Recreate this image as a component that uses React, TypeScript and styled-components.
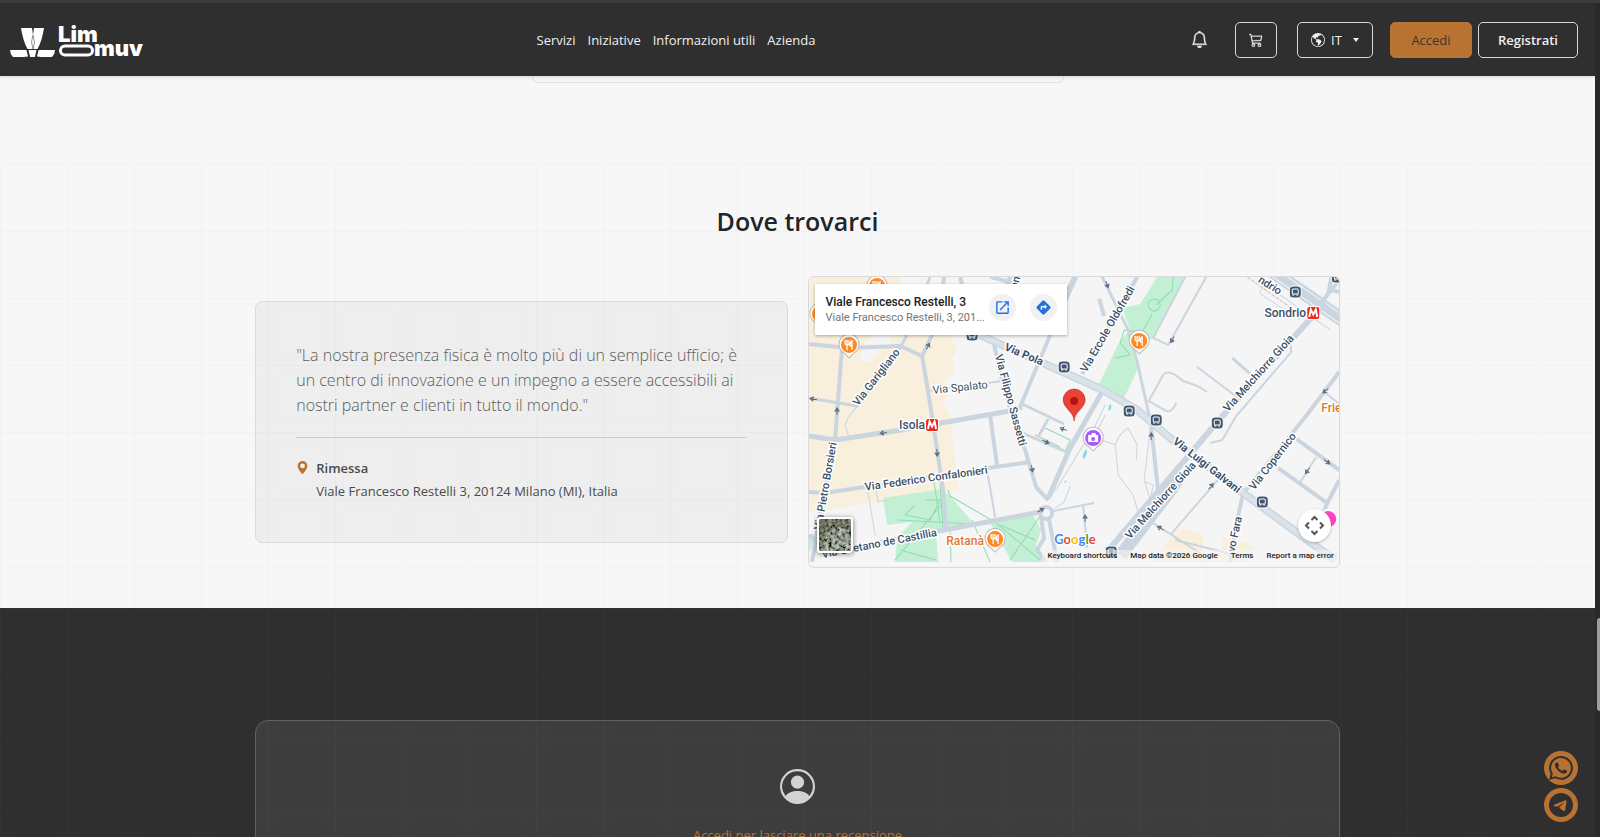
import React from "react";
import styled, { createGlobalStyle, css } from "styled-components";
import { BsBell, BsCart3, BsGlobeAmericas, BsGeoAltFill, BsPersonCircle, BsTelegram, BsWhatsapp } from "react-icons/bs";
import { MdDirections, MdOpenInNew } from "react-icons/md";

const color = {
  dark: "#2f2f2f",
  light: "#f7f7f7",
  copper: "#b87333",
  road: "#cbd5df",
  mapInk: "#3c5066",
};

const GlobalStyle = createGlobalStyle`
  *, *::before, *::after { box-sizing: border-box; }
  body {
    margin: 0;
    background: ${color.dark};
    font-family: "Open Sans", "Noto Sans", sans-serif;
    font-size: 13px;
    color: #212529;
  }
  h2, p, address { margin: 0; font-style: normal; }
  button, select { font: inherit; }
  a { color: inherit; text-decoration: none; }
`;

/* ---------- Page frame ---------- */

const Shell = styled.div`
  display: flex;
  height: 100vh;
  overflow: hidden;
  border-top: 3px solid #3b3a40;
`;

const Page = styled.div`
  position: relative;
  flex: 1;
  min-width: 0;
  overflow: hidden;
`;

const ScrollRail = styled.div`
  width: 5px;
  flex: none;
  display: flex;
  justify-content: flex-end;
  padding-top: 615px;
  background: #2a2a2c;
`;

const ScrollThumb = styled.div`
  width: 3px;
  height: 93px;
  border-radius: 3px 0 0 3px;
  background: #9d9d9d;
`;

/* ---------- Header ---------- */

const Header = styled.header`
  position: relative;
  z-index: 2;
  display: flex;
  align-items: center;
  justify-content: space-between;
  height: 73px;
  padding: 0 17px 0 10px;
  background: ${color.dark};
  box-shadow: 0 1px 3px rgba(0, 0, 0, 0.15);
`;

const Brand = styled.a`
  display: flex;
  width: 160px;
`;

const Nav = styled.nav`
  display: flex;
  gap: 12px;
  padding: 0 8px;
  color: #f0f0f0;
`;

const Actions = styled.div`
  display: flex;
  align-items: center;
`;

const outline = css`
  border: 1px solid #d8d8d8;
  border-radius: 5px;
  background: transparent;
  color: #f0f0f0;
`;

const BellButton = styled.button`
  display: flex;
  padding: 0 9px;
  margin-right: 18px;
  border: 0;
  background: none;
  color: #f0f0f0;
  font-size: 17px;

  path { stroke: currentColor; stroke-width: 0.4; }
`;

const CartButton = styled.button`
  ${outline}
  display: flex;
  align-items: center;
  justify-content: center;
  width: 42px;
  height: 36px;
  margin-right: 20px;
  padding: 0;
  font-size: 14px;

  path { stroke: currentColor; stroke-width: 0.3; }
`;

const Language = styled.label`
  ${outline}
  position: relative;
  display: flex;
  align-items: center;
  gap: 6px;
  width: 76px;
  height: 36px;
  margin-right: 17px;
  padding: 0 13px;
  font-size: 14px;

  select {
    flex: 1;
    min-width: 0;
    padding: 0;
    appearance: none;
    border: 0;
    background: none;
    color: inherit;
    font-size: 13px;
  }

  &::after {
    content: "";
    border: 3px solid transparent;
    border-top: 4px solid #f0f0f0;
    border-bottom: 0;
  }
`;

const AccountButton = styled.button<{ $filled?: boolean }>`
  ${outline}
  height: 36px;
  padding: 0;
  width: ${(p) => (p.$filled ? "82px" : "100px")};
  font-weight: ${(p) => (p.$filled ? 500 : 600)};
  ${(p) =>
    p.$filled &&
    css`
      margin-right: 6px;
      border-color: ${color.copper};
      background: ${color.copper};
      color: #3d332b;
    `}
`;

/* ---------- Sections ---------- */

const Container = styled.div`
  position: relative;
  width: 68%;
  margin: 0 auto;
`;

const PreviousSection = styled.section`
  height: 88px;
  background: ${color.light};
`;

const PreviousCard = styled.div`
  width: 532px;
  max-width: 50%;
  height: 7px;
  margin: 0 auto;
  border: 1px solid #e1e1e1;
  border-top: 0;
  border-radius: 0 0 6px 6px;
`;

const Section = styled.section<{ $dark?: boolean }>`
  position: relative;
  overflow: hidden;
  background: ${(p) => (p.$dark ? color.dark : color.light)};
  padding: ${(p) => (p.$dark ? "112px 0" : "39px 0 40px")};
`;

const GridLayer = styled.svg`
  position: absolute;
  inset: 0;
  width: 100%;
  height: 100%;
`;

const Title = styled.h2`
  text-align: center;
  font-size: 25px;
  line-height: 36px;
  font-weight: 600;
`;

const Columns = styled.div`
  display: grid;
  grid-template-columns: 1fr 1fr;
  gap: 20px;
  align-items: center;
  margin-top: 37px;
`;

const OfficeCard = styled.article`
  padding: 41px 40px 39px;
  border: 1px solid #dcdcdc;
  border-radius: 7px;
  background: rgba(0, 0, 0, 0.035);
`;

const Quote = styled.p`
  padding-bottom: 19px;
  border-bottom: 1px solid #cfcfcf;
  font-size: 16px;
  line-height: 25px;
  font-weight: 300;
  color: #5c5c5c;
`;

const Place = styled.address`
  display: grid;
  grid-template-columns: 12px 1fr;
  column-gap: 8px;
  margin-top: 19px;
  line-height: 23px;
  color: #4a4a4a;

  svg {
    margin-top: 4px;
    color: ${color.copper};
    font-size: 13px;
  }

  strong { font-weight: 600; }
  span { grid-column: 2; }
`;

/* ---------- Map ---------- */

const MapFrame = styled.div`
  position: relative;
  padding-bottom: 5px;
  overflow: hidden;
  border: 1px solid #dadada;
  border-radius: 6px;
  font-family: Roboto, sans-serif;
`;

const MapDrawing = styled.svg`
  display: block;
  width: 100%;
  height: 285px;
`;

const PlaceCard = styled.div`
  position: absolute;
  top: 7px;
  left: 6px;
  display: flex;
  align-items: center;
  gap: 14px;
  width: 252px;
  height: 51px;
  padding: 0 10px 4px 11px;
  background: #fff;
  box-shadow: 0 1px 3px rgba(0, 0, 0, 0.3);
`;

const PlaceText = styled.div`
  width: 149px;
  padding-top: 4px;
  font-size: 11px;
  line-height: 15px;
  color: #757575;
  white-space: nowrap;

  strong {
    display: block;
    font-size: 12px;
    line-height: 16px;
    font-weight: 500;
    color: #202124;
  }
`;

const RoundLink = styled.a`
  display: flex;
  flex: none;
  align-items: center;
  justify-content: center;
  width: 27px;
  height: 27px;
  border-radius: 50%;
  background: #f1f1f1;
  color: #1a73e8;
  font-size: 17px;
`;

const LayerButton = styled.button`
  position: absolute;
  left: 8px;
  bottom: 14px;
  display: flex;
  width: 36px;
  height: 36px;
  padding: 0;
  border: 2px solid #fff;
  border-radius: 3px;
  overflow: hidden;
  box-shadow: 0 1px 5px rgba(0, 0, 0, 0.5);
`;

const CameraButton = styled.button`
  position: absolute;
  right: 8px;
  bottom: 25px;
  display: flex;
  padding: 6px;
  border: 0;
  border-radius: 50%;
  background: #fff;
  box-shadow: 0 1px 3px rgba(0, 0, 0, 0.25);
`;

const Attribution = styled.div`
  position: absolute;
  right: 0;
  bottom: 5px;
  display: flex;
  gap: 13px;
  padding: 0 5px;
  background: rgba(245, 245, 245, 0.6);
  font-size: 8px;
  line-height: 12px;
  font-weight: 500;
  color: #222;
`;

const roads: Array<[string, number]> = [
  ["M809 344L848 348L900 346L922 356L937 325L944 277", 4],
  ["M842 348L835 440L833 450L820 515L812 562", 4],
  ["M809 398L857 406L900 348L912 325L930 277", 3],
  ["M922 356L927 385L934 430L943 490L946 528", 4],
  ["M809 436L835 440L895 431L1010 411L1022 407", 5],
  ["M928 391L1002 381", 2],
  ["M809 492L825 493L988 468L1030 462", 4],
  ["M990 415L997 466", 4],
  ["M987 470L995 517", 2],
  ["M993 340L1003 385L1015 425L1025 450L1036 487L1048 500", 4],
  ["M1076 277L1050 335L1020 407", 4],
  ["M1103 390L1070 448L1048 498", 5],
  ["M1020 432L1067 452M1022 404L1064 424M1048 419L1038 437", 3],
  ["M809 535L830 553L933 532L1040 512", 5],
  ["M1041 518L1044 538L1037 550L1046 562M1049 520L1057 562", 4],
  ["M1053 511L1094 503M1083 505L1087 548", 2],
  ["M857 406L848 418L845 425L849 437", 1],
  ["M1048 500L1058 486L1080 450L1093 430L1105 405M1055 508L1064 502L1070 486", 1],
  ["M868 492L875 535M875 485L878 502L888 500", 1],
  ["M990 277L1020 285M1010 277L1005 290M960 277L966 300", 4],
  ["M1102 277L1128 330L1137 362L1150 420", 3],
  ["M1137 277L1082 374M1074 277L1068 290M1099 299L1104 316", 4],
  ["M1206 277L1168 345L1153 338L1185 277", 2],
  ["M1325 303L1309 320L1291 340L1217 422L1110 548", 6],
  ["M1290 338L1291 352L1236 416L1222 440L1210 443", 2],
  ["M1178 480L1120 555", 12],
  ["M1182 476L1176 490L1124 558", 4],
  ["M1319 305L1339 280M1330 290L1339 292M1331 277L1328 294", 4],
  ["M1339 372L1305 417L1250 485L1243 493L1237 520L1230 562", 4],
  ["M1295 438L1339 470M1278 468L1327 503L1339 480M1327 503L1320 520", 4],
  ["M1316 457L1300 482M1324 392L1339 404", 2],
  ["M1151 427L1158 492", 4],
  ["M1148 402L1163 375Q1167 370 1175 375L1183 381L1197 386L1207 392M1148 401L1166 411Q1172 413 1176 403", 2],
  ["M1197 367L1238 398", 2],
  ["M1232 358L1250 374", 3],
  ["M1096 438L1115 445Q1120 432 1128 428L1137 445L1136 460M1115 445L1118 475L1133 495L1140 520", 1],
  ["M1150 430L1144 480L1150 500L1153 485L1145 482M1105 415L1095 435", 1],
  ["M1170 535L1220 477M1153 523L1200 553M1175 540L1235 555", 2],
  ["M1259 293L1264 284L1330 330M1260 294L1300 320", 1],
];

const parkPaths =
  "M934 482L940 522M940 482L943 530M948 490L950 496L995 522L1040 560M895 560L945 500M897 520L972 524M900 550L936 560M925 500L940 500L930 520L905 515L915 505M1000 525L1035 540M1040 516L1010 560M950 530L951 562M972 520L990 562M975 545L985 545M1045 428L1070 440L1066 450M1035 435L1060 447M1173 277L1172 290L1156 305M1152 314L1142 332L1124 330L1120 343L1130 355L1115 358";

/* text, centre x, centre y, angle, weight */
const labels: Array<[string, number, number, number, number]> = [
  ["Via Garigliano", 876, 377, -52, 500],
  ["Via Spalato", 960, 387, -6, 400],
  ["Via Pola", 1024, 354, 23, 700],
  ["Via Filippo Sassetti", 1011, 400, 75, 500],
  ["Via Ercole Oldofredi", 1107, 329, -60, 500],
  ["Via Melchiorre Gioia", 1258, 373, -48, 500],
  ["Via Melchiorre Gioia", 1160, 500, -48, 500],
  ["Via Luigi Galvani", 1207, 465, 38, 700],
  ["Via Copernico", 1272, 461, -52, 500],
  ["Via Federico Confalonieri", 926, 478, -8, 500],
  ["Via Pietro Borsieri", 825, 486, -80, 500],
  ["Via Gaetano de Castillia", 879, 543, -11, 500],
  ["ndrio", 1270, 285, 32, 500],
  ["vo Fara", 1234, 534, -78, 500],
  ["oni", 1015, 281, -75, 500],
];

const stops: Array<[number, number]> = [
  [972, 335], [1064, 367], [1129, 411], [1156, 420], [1217, 423], [1295, 292], [1262, 502], [1337, 277], [1111, 552],
];

const arrows: Array<[number, number, number]> = [
  [813, 399, 190], [837, 411, -90], [928, 346, -65], [883, 433, 172], [937, 453, 85], [1063, 429, 200], [1046, 442, 25],
  [1032, 469, 80], [1041, 510, -30], [1107, 285, 70], [1172, 340, 120], [1325, 391, 140], [1151, 436, -90],
  [1211, 486, -50], [1160, 528, 210], [1307, 471, 125], [1327, 462, 38], [1085, 518, -90],
];

const FoodPin = ({ x, y }: { x: number; y: number }) => (
  <g transform={`translate(${x} ${y})`}>
    <path d="M0 13L-5 8A10 10 0 1 1 5 8Z" fill="#fff" stroke="#b9b9b9" strokeWidth="1" />
    <circle r="8" fill="#ff8a24" />
    <path d="M-4 -5v3q0 2 2 2t2-2v-3M-2 -5V5M3 5V-4q-2 1-2 5h2" fill="none" stroke="#fff" strokeWidth="1.3" />
  </g>
);

const Metro = ({ x, y }: { x: number; y: number }) => (
  <g transform={`translate(${x} ${y})`}>
    <rect x="-7" y="-7" width="14" height="14" rx="2" fill="#fff" />
    <rect x="-6" y="-6" width="12" height="12" rx="2" fill="#f32717" />
    <path d="M-4 4L-2.500 -3.500L0 1.500L2.500 -3.500L4 4" fill="none" stroke="#fff" strokeWidth="2" />
  </g>
);

const Map = () => (
  <MapDrawing viewBox="809 277 530 285" preserveAspectRatio="xMidYMid slice" role="img" aria-label="Map">
    <rect x="600" y="277" width="950" height="290" fill="#f5f5f5" />
    <g fill="#f8efdc">
      <path d="M809 277H900L897 305L950 335L957 350L952 358L955 375L945 378L948 395L943 403L950 415L958 490L885 500L809 513Z" />
      <path d="M1180 527L1203 535L1202 555L1255 545L1245 562H1150ZM1222 537L1250 543L1246 552L1222 552Z" />
    </g>
    <path d="M860 361L864 341L876 335L893 334L888 345L877 352L872 361Z" fill="#f5f5f5" />
    <g fill="#c3f0d5">
      <path d="M883 498L942 489L952 498L973 523L936 532L938 562H895L897 538L912 522L887 525Z" />
      <path d="M990 523L1033 515L1041 530L1036 545L1044 562H1012Z" />
      <path d="M1157 277H1185L1153 338L1135 348L1138 368L1123 400L1098 386L1120 340L1130 330L1122 308L1140 304Z" />
      <path d="M809 537L814 534L812 548L809 552Z" />
    </g>
    <path d={parkPaths} fill="none" stroke="#8edbb0" />
    <circle cx="1154" cy="305" r="6" fill="none" stroke="#8edbb0" />
    <path d="M1273 272L1345 322" stroke={color.road} strokeWidth="14" />
    <path d="M1271 276L1343 326M1277 270L1345 317" stroke="#f5f5f5" />
    <g fill="none" stroke={color.road} strokeLinejoin="round">
      {roads.map(([d, w]) => <path key={d} d={d} strokeWidth={w} />)}
      <circle cx="1046" cy="513" r="6" strokeWidth="4" fill="#f5f5f5" />
      <path d="M975 333L1103 390L1137 410L1170 438L1243 493L1300 535L1335 560" strokeWidth="8" />
    </g>
    <path d="M975 333L1103 390L1137 410L1170 438L1243 493L1300 535L1335 560" fill="none" stroke="#dbe3ea" strokeWidth="5" />
    <path d="M1247 277L1295 311" stroke="#c4c4c4" strokeDasharray="4 1" />
    <path d="M1109 405l2 -1v5l-3 2zM1084 452l2 -3 1 4-3 6-2-2zM1064 482l2 -2v2l-2 1z" fill="#86d8ef" />
    <g fill="none" stroke="#5b6b7c">
      {arrows.map(([x, y, r]) => (
        <path key={`${x}-${y}`} transform={`translate(${x} ${y}) rotate(${r})`} d="M-4 0H3M0 -2L3 0L0 2Z" />
      ))}
    </g>
    {stops.map(([x, y]) => (
      <g key={`${x}-${y}`} transform={`translate(${x} ${y})`}>
        <rect x="-6" y="-6" width="12" height="12" rx="4" fill="#3f566e" stroke="#fff" />
        <rect x="-3" y="-3" width="6" height="5" rx="1" fill="none" stroke="#fff" />
        <path d="M-3 3h2M1 3h2" stroke="#fff" />
      </g>
    ))}
    <g fill={color.mapInk} stroke="#fff" strokeWidth="3" strokeLinejoin="round" paintOrder="stroke" textAnchor="middle" fontSize="11">
      {labels.map(([text, x, y, r, weight]) => (
        <text key={`${text}-${x}`} transform={`translate(${x} ${y}) rotate(${r})`} y="4" fontWeight={weight}>{text}</text>
      ))}
      <g fontSize="12" fontWeight="500">
        <text x="912" y="429">Isola</text>
        <text x="1285" y="317">Sondrio</text>
        <text x="965" y="545" fill="#e0772c">Ratanà</text>
        <text x="1331" y="412" fill="#e0772c">Frie</text>
      </g>
    </g>
    <Metro x={932} y={425} />
    <Metro x={1313} y={313} />
    <FoodPin x={849} y={345} />
    <FoodPin x={877} y={286} />
    <FoodPin x={820} y={314} />
    <FoodPin x={1139} y={341} />
    <FoodPin x={995} y={539} />
    <g transform="translate(1093 438)">
      <path d="M0 13L-5 8A10 10 0 1 1 5 8Z" fill="#fff" stroke="#b9b9b9" />
      <circle r="8" fill="#a55bff" />
      <path d="M-5 -3h3l1-2h3l1 2h2v7h-10z" fill="#fff" />
      <circle r="2" cy="1" fill="#a55bff" />
    </g>
    <circle cx="1328" cy="519" r="9" fill="#ff46c0" stroke="#fff" strokeWidth="2" />
    <path d="M1074 421C1074 412 1063 408 1063 400A11 11 0 0 1 1085 400C1085 408 1074 412 1074 421Z" fill="#ea4335" stroke="#b31412" strokeWidth="0.500" />
    <circle cx="1074" cy="401" r="4" fill="#b31412" />
    <text x="1054" y="544" fontSize="13" fontWeight="700" fontFamily="Lato, sans-serif" stroke="#fff" strokeWidth="2" paintOrder="stroke">
      <tspan fill="#4285f4">G</tspan><tspan fill="#ea4335">o</tspan><tspan fill="#fbbc04">o</tspan><tspan fill="#4285f4">g</tspan><tspan fill="#34a853">l</tspan><tspan fill="#ea4335">e</tspan>
    </text>
  </MapDrawing>
);

const Satellite = () => (
  <svg width="32" height="32" viewBox="0 0 32 32" aria-hidden="true">
    <filter id="terrain" x="0" y="0" width="1" height="1">
      <feTurbulence type="fractalNoise" baseFrequency="0.3" numOctaves="3" seed="4" />
      <feColorMatrix values="1.2 0.3 0 0 -0.48  1.1 0.4 0 0 -0.46  1 0.2 0.2 0 -0.46  0 0 0 0 1" />
    </filter>
    <rect width="32" height="32" filter="url(#terrain)" />
    <path d="M0 0H32V12L20 8L9 14L0 32Z" fill="#4d4a33" fillOpacity="0.400" />
    <path d="M13 10L22 31M18 14L14 29M20 18L30 10" stroke="#8fa3b5" strokeOpacity="0.500" strokeWidth="1.500" />
  </svg>
);

/* ---------- Review card and floating contacts ---------- */

const ReviewCard = styled.div`
  display: flex;
  flex-direction: column;
  align-items: center;
  gap: 21px;
  min-height: 260px;
  padding-top: 48px;
  border: 1px solid #616161;
  border-radius: 13px;
  background: rgba(255, 255, 255, 0.07);
  color: #d2d2d2;
  font-size: 35px;

  a {
    font-size: 13px;
    line-height: 20px;
    color: ${color.copper};
  }
`;

const Contacts = styled.div`
  position: absolute;
  right: 17px;
  bottom: 15px;
  z-index: 2;
  display: grid;
  gap: 3px;

  a {
    display: flex;
    align-items: center;
    justify-content: center;
    width: 34px;
    height: 34px;
    border-radius: 50%;
    background: ${color.copper};
    color: ${color.dark};
    font-size: 24px;
  }
`;

const GridPattern = ({ id, stroke }: { id: string; stroke: string }) => (
  <GridLayer aria-hidden="true">
    <pattern id={id} width="67" height="67" patternUnits="userSpaceOnUse">
      <path d="M0 0.500H67M0.500 0V67" stroke={stroke} strokeWidth="1" fill="none" />
      <rect x="8.500" y="8.500" width="50" height="50" rx="1" stroke={stroke} strokeOpacity="0.600" fill="none" />
    </pattern>
    <rect width="100%" height="100%" fill={`url(#${id})`} />
  </GridLayer>
);

const Logo = () => (
  <svg width="144" height="38" viewBox="0 -6 144 38" fill="#fff" role="img" aria-label="Lim muv">
    <path d="M11 1H22L23 8L24 1H34Q32 14 27.500 22H17.500Q13 14 11 1Z" />
    <path d="M23 8Q20 15 23 22Q26 15 23 8M17 22.500H28" stroke={color.dark} strokeWidth="0.500" fill="none" />
    <path d="M0 23H16.500L18 29.500Q14 30 8 30H3Q0 27 0 23ZM28.500 23H45Q45 27 42 30H37Q31 30 27 29.500ZM18.500 23H26.500L25 30H20Z" />
    <path d="M17 23L19.500 30M28 23L25.500 30" stroke={color.dark} strokeWidth="1" />
    <g fontFamily="Inter, sans-serif" fontWeight="900">
      <text x="48" y="15" fontSize="22">Lim</text>
      <text x="84" y="29" fontSize="22">muv</text>
    </g>
    <rect x="50.500" y="19" width="32" height="9" rx="4.500" fill="none" stroke="#fff" strokeWidth="3" />
  </svg>
);

export default function App() {
  return (
    <Shell>
      <GlobalStyle />
      <Page>
        <Header>
          <Brand href="#"><Logo /></Brand>
          <Nav>
            <a href="#servizi">Servizi</a>
            <a href="#iniziative">Iniziative</a>
            <a href="#informazioni">Informazioni utili</a>
            <a href="#azienda">Azienda</a>
          </Nav>
          <Actions>
            <BellButton aria-label="Notifiche"><BsBell /></BellButton>
            <CartButton aria-label="Carrello"><BsCart3 /></CartButton>
            <Language>
              <BsGlobeAmericas />
              <select aria-label="Lingua" defaultValue="IT"><option>IT</option></select>
            </Language>
            <AccountButton $filled>Accedi</AccountButton>
            <AccountButton>Registrati</AccountButton>
          </Actions>
        </Header>
        <main>
          <PreviousSection><PreviousCard /></PreviousSection>
          <Section>
            <GridPattern id="grid-light" stroke="#f2f2f2" />
            <Container>
              <Title>Dove trovarci</Title>
              <Columns>
                <OfficeCard>
                  <Quote>
                    "La nostra presenza fisica è molto più di un semplice ufficio; è un centro di innovazione e un
                    impegno a essere accessibili ai nostri partner e clienti in tutto il mondo."
                  </Quote>
                  <Place>
                    <BsGeoAltFill />
                    <strong>Rimessa</strong>
                    <span>Viale Francesco Restelli 3, 20124 Milano (MI), Italia</span>
                  </Place>
                </OfficeCard>
                <MapFrame>
                  <Map />
                  <PlaceCard>
                    <PlaceText>
                      <strong>Viale Francesco Restelli, 3</strong>
                      <span>Viale Francesco Restelli, 3, 201...</span>
                    </PlaceText>
                    <RoundLink href="#open" aria-label="Open in Maps"><MdOpenInNew /></RoundLink>
                    <RoundLink href="#directions" aria-label="Directions"><MdDirections /></RoundLink>
                  </PlaceCard>
                  <LayerButton aria-label="Satellite"><Satellite /></LayerButton>
                  <CameraButton aria-label="Camera controls">
                    <svg width="21" height="21" viewBox="0 0 21 21" fill="none" stroke="#555" strokeWidth="2">
                      <path d="M7.500 5L10.500 2L13.500 5M7.500 16L10.500 19L13.500 16M5 7.500L2 10.500L5 13.500M16 7.500L19 10.500L16 13.500" />
                    </svg>
                  </CameraButton>
                  <Attribution>
                    <span>Keyboard shortcuts</span>
                    <span>Map data ©2026 Google</span>
                    <a href="#terms">Terms</a>
                    <a href="#report">Report a map error</a>
                  </Attribution>
                </MapFrame>
              </Columns>
            </Container>
          </Section>
          <Section $dark>
            <GridPattern id="grid-dark" stroke="#333333" />
            <Container>
              <ReviewCard>
                <BsPersonCircle />
                <a href="#accedi">Accedi per lasciare una recensione</a>
              </ReviewCard>
            </Container>
          </Section>
        </main>
        <Contacts>
          <a href="#whatsapp" aria-label="WhatsApp"><BsWhatsapp /></a>
          <a href="#telegram" aria-label="Telegram"><BsTelegram /></a>
        </Contacts>
      </Page>
      <ScrollRail><ScrollThumb /></ScrollRail>
    </Shell>
  );
}
